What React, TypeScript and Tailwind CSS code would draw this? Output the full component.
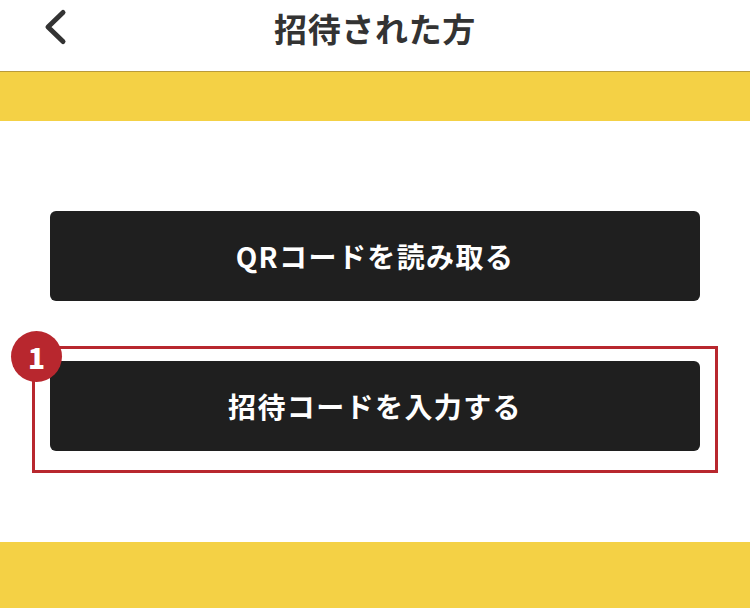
const jp = { fontFamily: '"Noto Sans CJK JP", "Noto Sans", sans-serif' };

function ActionButton({ label }: { label: string }) {
  return (
    <button className="flex h-[90px] w-full items-center justify-center rounded-[6px] bg-[#1f1f1f] text-[28px] font-bold tracking-[0.05em] text-white">
      {label}
    </button>
  );
}

export default function App() {
  return (
    <div className="flex h-[608px] w-[750px] flex-col bg-white text-[#333333]" style={jp}>
      {/* header */}
      <header className="relative flex h-[72px] shrink-0 items-center justify-center border-b border-[#b99a3a]">
        <button className="absolute left-[42px] top-[8px] text-[#333333]">
          <svg width="26" height="38" viewBox="0 0 26 38" fill="none">
            <polyline points="21,4.5 6,19 21,33.5" stroke="currentColor" strokeWidth="5" strokeLinecap="round" strokeLinejoin="round" />
          </svg>
        </button>
        <h1 className="-mt-[14px] text-[33px] font-bold tracking-[0.02em]">招待された方</h1>
      </header>

      <div className="h-[49px] shrink-0 bg-[#f4d145]" />

      <main className="flex flex-1 flex-col px-[50px] pt-[90px]">
        <ActionButton label="QRコードを読み取る" />

        <div className="relative -mx-[18px] mt-[45px] border-[3px] border-[#b8272e] px-[15px] pt-[12px] pb-[19px]">
          <span className="absolute -left-[24px] -top-[18px] flex h-[51px] w-[51px] items-center justify-center rounded-full bg-[#b8272e] text-[28px] font-extrabold text-white">
            1
          </span>
          <ActionButton label="招待コードを入力する" />
        </div>
      </main>

      <div className="h-[66px] shrink-0 bg-[#f4d145]" />
    </div>
  );
}
